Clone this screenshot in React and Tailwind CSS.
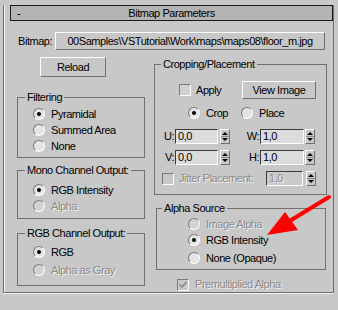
import React from "react";

const dis = "text-[#8a8a8a] [text-shadow:1px_1px_0_#f2f2f2]";

const Radio = ({ checked, disabled }) => (
  <span
    className={`flex items-center justify-center shrink-0 w-[12px] h-[12px] rounded-full border border-t-[#7a7a7a] border-l-[#7a7a7a] border-b-white border-r-white ${
      disabled ? "bg-[#d2d2d2]" : "bg-[#e4e4e4]"
    }`}
  >
    {checked && <span className="w-[4px] h-[4px] rounded-full bg-black" />}
  </span>
);

const RadioRow = ({ label, checked, disabled, className = "" }) => (
  <div className={`flex items-center h-[16px] ${className}`}>
    <Radio checked={checked} disabled={disabled} />
    <span className={`ml-[6px] whitespace-nowrap ${disabled ? dis : ""}`}>{label}</span>
  </div>
);

const Check = ({ checked, disabled }) => (
  <span
    className={`flex items-center justify-center shrink-0 w-[12px] h-[12px] border border-t-[#7a7a7a] border-l-[#7a7a7a] border-b-white border-r-white ${
      disabled ? "bg-[#c8c8c8]" : "bg-[#d0d0d0]"
    }`}
  >
    {checked && (
      <svg width="10" height="10" viewBox="0 0 10 10">
        <polyline points="1.5,4.5 4,7 8.5,2" fill="none" stroke="#8a8a8a" strokeWidth="1.6" />
      </svg>
    )}
  </span>
);

const Button = ({ className = "", children }) => (
  <div
    className={`flex items-center justify-center shrink-0 whitespace-nowrap border border-t-white border-l-white border-b-[#707070] border-r-[#707070] bg-[#c8c8c8] ${className}`}
  >
    {children}
  </div>
);

const Arrows = () => (
  <div className="w-[10px] h-[15px] shrink-0 border border-t-white border-l-white border-b-[#707070] border-r-[#707070]">
    <svg width="8" height="13" viewBox="0 0 8 13">
      <polygon points="1,5 7,5 4,2" fill="#000" />
      <line x1="0" y1="6.5" x2="8" y2="6.5" stroke="#8a8a8a" />
      <polygon points="1,8 7,8 4,11" fill="#000" />
    </svg>
  </div>
);

const Spinner = ({ value, width, disabled, gap = "gap-[2px]" }) => (
  <div className={`flex items-center ${gap}`}>
    <div
      className={`h-[15px] ${width} pl-[2px] flex items-center border border-t-[#3a3a3a] border-l-[#3a3a3a] border-b-white border-r-white ${
        disabled ? `bg-[#cacaca] ${dis}` : "bg-[#dcdcdc]"
      }`}
    >
      {value}
    </div>
    <Arrows />
  </div>
);

// group box: padding goes on the inner div so the legend keeps its place
const Group = ({ label, className = "", legend = "ml-[7px]", inner = "", children }) => (
  <fieldset className={`border border-[#707070] ${className}`}>
    <legend className={`${legend} px-[2px] leading-[13px] whitespace-nowrap`}>{label}</legend>
    <div className={inner}>{children}</div>
  </fieldset>
);

export default function App() {
  return (
    <div className="relative w-[338px] h-[310px] overflow-hidden bg-[#c8c8c8] text-black text-[11px] leading-[13px] tracking-[-0.45px] font-['Liberation_Sans',Arial,sans-serif]">
      <div className="pt-[13px] pl-[3px] pr-[4px]">
        <div className="h-[288px] border-l border-r border-b border-[#6e6e6e] shadow-[inset_1px_0_0_#f4f4f4,0_1px_0_#f4f4f4]">
          {/* Rollout title */}
          <div className="-mt-[8px] ml-[6px] h-[16px] flex items-center border border-[#1a1a1a] bg-[#b4b4b4]">
            <span className="w-[20px] pl-[6px]">-</span>
            <span className="flex-1 text-center pr-[20px]">Bitmap Parameters</span>
          </div>

          {/* Bitmap path */}
          <div className="mt-[11px] pl-[14px] flex items-center h-[18px]">
            <span className="w-[37px]">Bitmap:</span>
            <Button className="w-[270px] h-[18px]">
              {"00Samples\\VSTutorial\\Work\\maps\\maps08\\floor_m.jpg"}
            </Button>
          </div>

          <div className="mt-[7px] pl-[13px] flex">
            {/* Left column */}
            <div className="w-[128px] shrink-0">
              <Button className="ml-[23px] w-[66px] h-[20px]">Reload</Button>

              <Group label="Filtering" className="mt-[14px]" inner="pl-[15px] pt-[2px] pb-[3px]">
                <RadioRow label="Pyramidal" checked />
                <RadioRow label="Summed Area" />
                <RadioRow label="None" />
              </Group>

              <Group label="Mono Channel Output:" className="mt-[6px]" inner="pl-[15px] pt-[5px] pb-[4px]">
                <RadioRow label="RGB Intensity" checked />
                <RadioRow label="Alpha" disabled />
              </Group>

              <Group label="RGB Channel Output:" className="mt-[8px]" inner="pl-[15px] pt-[4px] pb-[7px]">
                <RadioRow label="RGB" checked />
                <RadioRow label="Alpha as Gray" disabled className="mt-[2px]" />
              </Group>
            </div>

            {/* Right column */}
            <div className="ml-[9px] w-[173px] shrink-0">
              <Group label="Cropping/Placement" legend="ml-[6px]" className="mt-[1px]" inner="pb-[8px]">
                <div className="mt-[10px] flex items-center h-[18px]">
                  <div className="w-[87px] pl-[24px] flex items-center">
                    <Check />
                    <span className="ml-[5px]">Apply</span>
                  </div>
                  <Button className="w-[74px] h-[18px]">View Image</Button>
                </div>

                <div className="mt-[6px] flex items-center">
                  <div className="w-[86px] pl-[33px]">
                    <RadioRow label="Crop" checked />
                  </div>
                  <RadioRow label="Place" />
                </div>

                <div className="mt-[8px] flex items-center h-[15px]">
                  <span className="w-[20px] pr-[1px] text-right">U:</span>
                  <Spinner value="0,0" width="w-[43px]" />
                  <span className="w-[30px] pr-[1px] text-right">W:</span>
                  <Spinner value="1,0" width="w-[44px]" gap="gap-[1px]" />
                </div>

                <div className="mt-[6px] flex items-center h-[15px]">
                  <span className="w-[20px] pr-[1px] text-right">V:</span>
                  <Spinner value="0,0" width="w-[43px]" />
                  <span className="w-[30px] pr-[1px] text-right">H:</span>
                  <Spinner value="1,0" width="w-[44px]" gap="gap-[1px]" />
                </div>

                <div className="mt-[6px] flex items-center h-[15px]">
                  <div className="w-[111px] pl-[7px] flex items-center">
                    <Check disabled />
                    <span className={`ml-[5px] whitespace-nowrap ${dis}`}>Jitter Placement:</span>
                  </div>
                  <Spinner value="1,0" width="w-[37px]" disabled gap="gap-[3px]" />
                </div>
              </Group>

              <Group
                label="Alpha Source"
                legend="ml-[5px]"
                className="mt-[7px] ml-[2px] mr-[1px]"
                inner="pl-[31px] pt-[1px] pb-[3px]"
              >
                <RadioRow label="Image Alpha" disabled />
                <RadioRow label="RGB Intensity" checked />
                <RadioRow label="None (Opaque)" className="mt-[2px]" />
              </Group>

              <div className="mt-[8px] pl-[23px] flex items-center h-[13px]">
                <Check checked disabled />
                <span className={`ml-[6px] ${dis}`}>Premultiplied Alpha</span>
              </div>
            </div>
          </div>
        </div>
      </div>

      {/* Red pointer arrow */}
      <svg className="absolute inset-0 pointer-events-none" width="338" height="310" viewBox="0 0 338 310">
        <line x1="329" y1="197" x2="288" y2="222" stroke="#ff0000" strokeWidth="4" strokeLinecap="round" />
        <polygon points="267,235 285,212 298,230" fill="#ff0000" />
      </svg>
    </div>
  );
}
